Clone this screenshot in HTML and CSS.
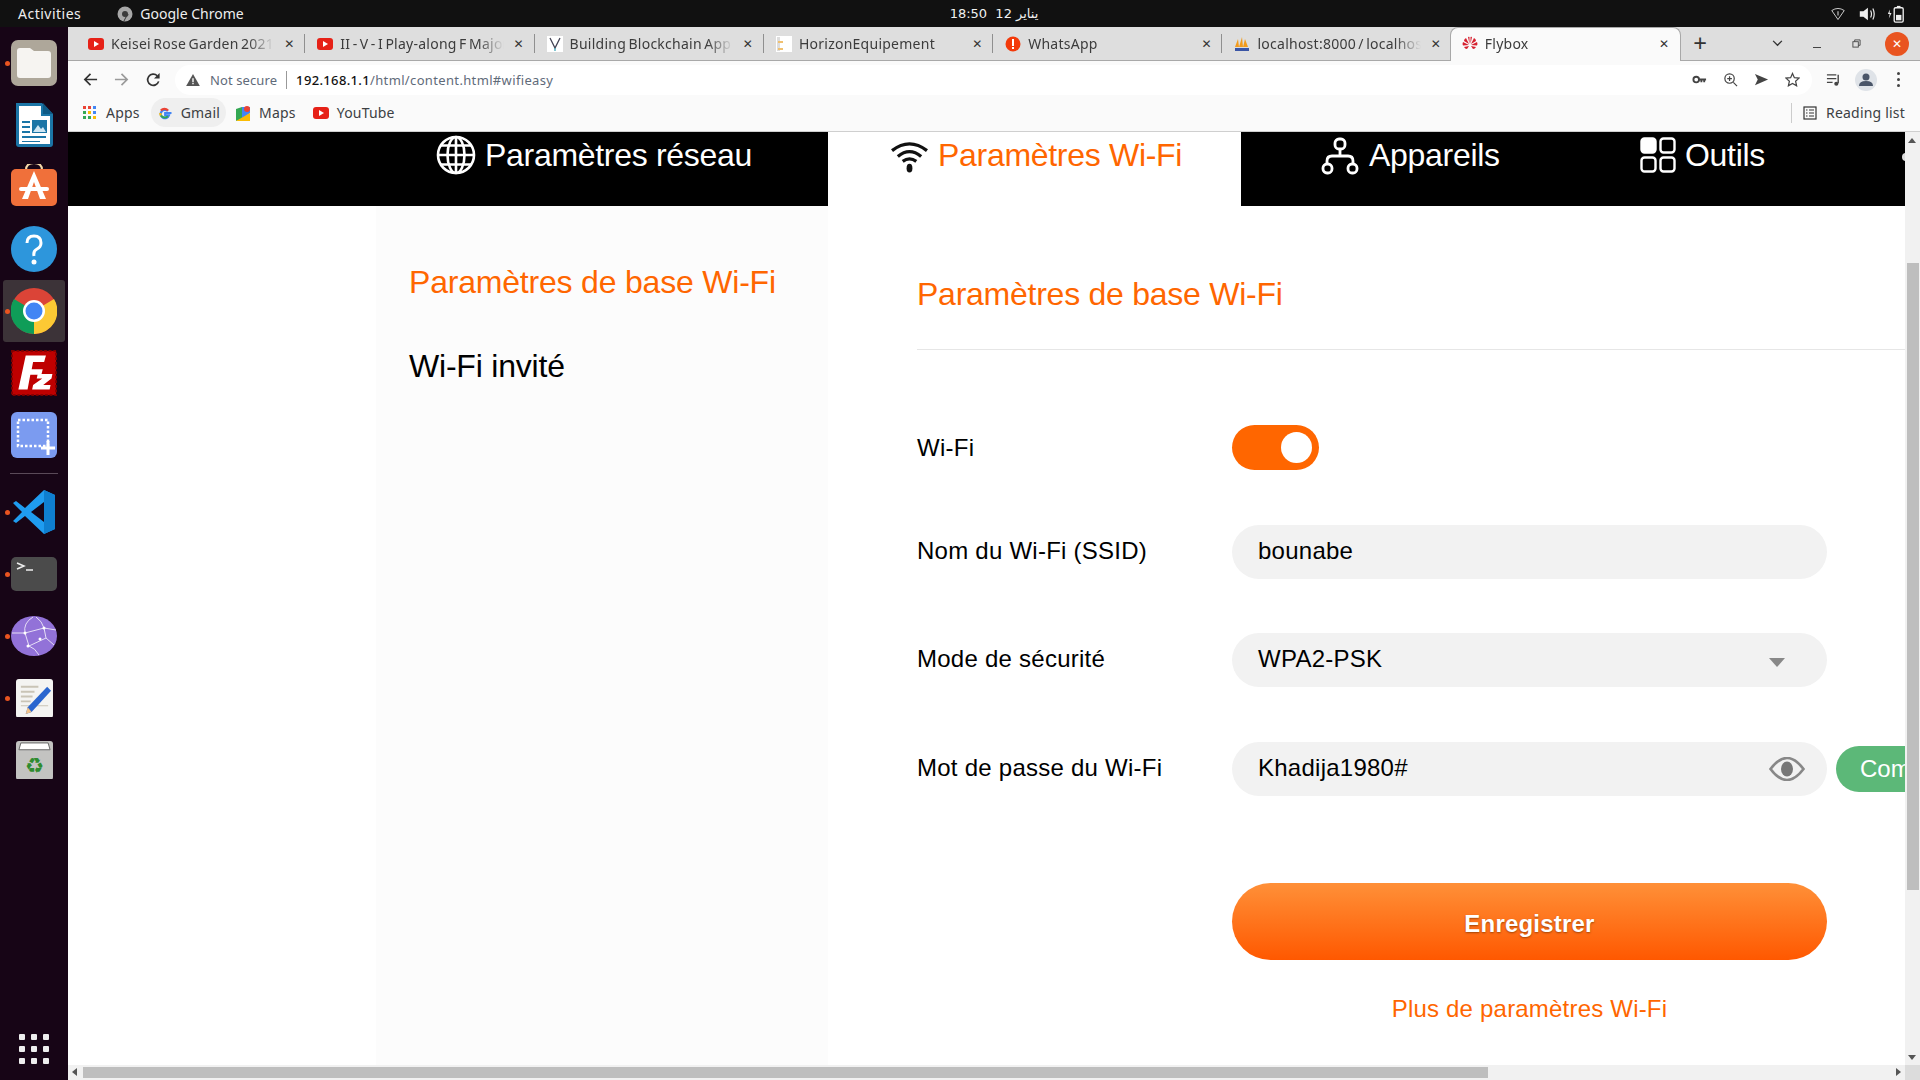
FILE: index.html
```html
<!DOCTYPE html>
<html lang="en">
<head>
    <meta charset="UTF-8">
    <title>Flybox</title>
    <link rel="stylesheet" href="styles.css">
</head>
<body>
    <div class="topbar">
        <div class="topbar-left">
            <span class="activities">Activities</span>
            <svg class="top-chrome-icon" viewBox="0 0 16 16"><circle cx="8" cy="8" r="7.5" fill="#a8a8a8"/><circle cx="8" cy="8" r="3" fill="#3a3a3a"/><path d="M11 8a3 3 0 0 1-2 3l-2 4" fill="none" stroke="#3a3a3a" stroke-width="1"/></svg>
            <span>Google Chrome</span>
        </div>
        <div class="clock">18:50&nbsp;&nbsp;12 يناير</div>
        <div class="topbar-right">
            <svg class="tray-icon" viewBox="-3 -2 26 22"><path d="M1 4q9-6 18 0l-9 13z" fill="none" stroke="#ddd" stroke-width="1.3"/><path d="M10 5v6" stroke="#ddd" stroke-width="1.5"/></svg>
            <svg class="tray-icon" viewBox="0 0 20 18"><path d="M2 6h4l5-4v14l-5-4H2z" fill="#eee"/><path d="M14 5q2 4 0 8M16.500 3q3 6 0 12" fill="none" stroke="#eee" stroke-width="1.300"/></svg>
            <svg class="tray-icon" viewBox="0 0 20 20"><path d="M3 5l-2 5h2l-1 5 3-6H3z" fill="#eee"/><rect x="8" y="3" width="10" height="16" rx="1.500" fill="none" stroke="#eee" stroke-width="1.500"/><rect x="11" y="1" width="4" height="2" fill="#eee"/><rect x="10" y="11" width="6" height="6" fill="#eee"/></svg>
        </div>
    </div>

    <div class="desktop">
        <div class="dock">
            <div class="dock-item">
                <span class="dock-dot"></span>
                <svg viewBox="0 0 46 46"><rect width="46" height="46" rx="7" fill="#aea79a"/><path d="M6 11q0-3 3-3h10l4 3h14q3 0 3 3v21q0 3-3 3H9q-3 0-3-3z" fill="#f6f4f1"/></svg>
            </div>
            <div class="dock-item">
                <svg viewBox="0 0 46 46"><path d="M5 1h26l11 11v30q0 3-3 3H8q-3 0-3-3z" fill="#1b75a6"/><path d="M8 4h22v10h9v28H8z" fill="#fff"/><path d="M32 1l10 11H32z" fill="#0f5a85"/><path d="M11 19h8v2h-8zM11 24h8v2h-8zM11 29h8v2h-8zM11 34h24v2H11zM11 39h18v1h-18z" fill="#1b75a6"/><rect x="21" y="18" width="15" height="13" fill="#1b75a6"/><path d="M22 30l5-7 3 4 2-2 3 5z" fill="#cfe6f3"/></svg>
            </div>
            <div class="dock-item">
                <svg viewBox="0 3 46 46"><path d="M15 9q0-7 8-7t8 7" fill="none" stroke="#f3d8a8" stroke-width="2"/><rect y="8" width="46" height="37" rx="5" fill="#f0703a"/><path d="M23 10L11 38h6l6-17 6 17h6z" fill="#fff"/><rect x="8" y="26" width="30" height="4" rx="2" fill="#fff"/></svg>
            </div>
            <div class="dock-item">
                <svg viewBox="0 0 46 46"><circle cx="23" cy="23" r="23" fill="#2d96dc"/><path d="M16 17q0-7 7-7t7 7q0 4-4 6t-3 7" fill="none" stroke="#fff" stroke-width="3"/><circle cx="23" cy="36" r="2.500" fill="#fff"/></svg>
            </div>
            <div class="dock-item dock-active">
                <span class="dock-dot"></span>
                <svg viewBox="0 0 46 46"><circle cx="23" cy="23" r="23" fill="#db4437"/><path d="M23 23L3 11a23 23 0 0 0 20 35z" fill="#0f9d58"/><path d="M23 23l20-12A23 23 0 0 1 23 46z" fill="#fcc934"/><circle cx="23" cy="23" r="11" fill="#fff"/><circle cx="23" cy="23" r="8.500" fill="#4285f4"/></svg>
            </div>
            <div class="dock-item">
                <svg viewBox="0 0 50 50"><rect x="1" y="1" width="48" height="48" fill="#bf0000" stroke="#7c0000" stroke-width="2" stroke-dasharray="3 2"/><path d="M16 6h22l-2 7H24l-1.500 8h12L33 27H21l-3 16H8z" fill="#fff"/><path d="M29 26h16l-1 5-9 7h8l-1 5H23l1-5 10-7h-6z" fill="#fff"/></svg>
            </div>
            <div class="dock-item">
                <svg viewBox="0 0 46 46"><rect width="46" height="46" rx="6" fill="#7b9bf0"/><rect x="7" y="8" width="30" height="26" fill="none" stroke="#fff" stroke-width="2.500" stroke-dasharray="2.500 2"/><path d="M37 29v14M30 36h14" stroke="#fff" stroke-width="3"/></svg>
            </div>
            <div class="dock-separator"></div>
            <div class="dock-item">
                <span class="dock-dot"></span>
                <svg viewBox="0 0 46 46"><path d="M33 1l11 5v34l-11 5L14 27 5 34l-3-2 9-9-9-9 3-2 9 7z" fill="#1f9cf0"/><path d="M33 13v20l-13-10z" fill="#170516"/><path d="M33 1l11 5v34l-11 5z" fill="#0f7fd0"/></svg>
            </div>
            <div class="dock-item">
                <span class="dock-dot"></span>
                <svg viewBox="0 0 46 34"><rect width="46" height="34" rx="5" fill="#4b4b4b"/><path d="M6 6l7 3-7 3" fill="none" stroke="#eee" stroke-width="1.500"/><path d="M15 13h7" stroke="#eee" stroke-width="1.500"/></svg>
            </div>
            <div class="dock-item">
                <span class="dock-dot"></span>
                <svg viewBox="0 0 46 40"><ellipse cx="23" cy="20" rx="23" ry="20" fill="#9272d8"/><path d="M1 17l13 0 19-5 12 2M14 17l4 13 17-8 -2-10M18 30q6 2 10 9M35 22l8 7M14 17q-2-10 8-16M33 12q-2-7-8-11" fill="none" stroke="#e6def6" stroke-width="1"/><circle cx="14" cy="17" r="1.500" fill="#fff"/><circle cx="33" cy="12" r="1.500" fill="#fff"/><circle cx="29" cy="23" r="1.500" fill="#fff"/><circle cx="17" cy="30" r="1.500" fill="#fff"/></svg>
            </div>
            <div class="dock-item">
                <span class="dock-dot"></span>
                <svg class="dock-narrow" viewBox="0 0 38 40"><rect width="38" height="40" rx="3" fill="#f4f4f2"/><path d="M5 7h18v2H5zM5 12h14v2H5zM5 17h12v2H5zM5 22h10v2H5zM5 27h28v1H5z" fill="#c9c4b6"/><path d="M32 8l4 4-20 22-6 2 2-7z" fill="#2a66cf"/><path d="M12 29l4 5-6 2z" fill="#f2c38a"/></svg>
            </div>
            <div class="dock-item">
                <svg class="dock-narrow" viewBox="0 0 38 40"><rect width="38" height="40" rx="3" fill="#c3c3c1"/><path d="M5 2h28l2 7H3z" fill="#fff" stroke="#666" stroke-width="1"/><text class="recycle-glyph" x="19" y="33" text-anchor="middle">♻</text></svg>
            </div>
            <div class="dock-grid">
                <span></span><span></span><span></span>
                <span></span><span></span><span></span>
                <span></span><span></span><span></span>
            </div>
        </div>

        <div class="browser">
            <div class="tabstrip">
                <div class="tab">
                    <svg class="favicon" viewBox="0 0 16 16"><rect y="2" width="16" height="12" rx="3" fill="#e62117"/><path d="M6 5l5 3-5 3z" fill="#fff"/></svg>
                    <span class="tab-title">Keisei Rose Garden 2021</span>
                    <span class="tab-close">✕</span>
                </div>
                <div class="tab">
                    <svg class="favicon" viewBox="0 0 16 16"><rect y="2" width="16" height="12" rx="3" fill="#e62117"/><path d="M6 5l5 3-5 3z" fill="#fff"/></svg>
                    <span class="tab-title">II - V - I Play-along F Major</span>
                    <span class="tab-close">✕</span>
                </div>
                <div class="tab">
                    <svg class="favicon" viewBox="0 0 16 16"><rect width="16" height="16" fill="#fff"/><path d="M3 2l5 10 5-10" fill="none" stroke="#445" stroke-width="1.300"/><path d="M8 12v3" stroke="#4ab" stroke-width="1.300"/></svg>
                    <span class="tab-title">Building Blockchain App</span>
                    <span class="tab-close">✕</span>
                </div>
                <div class="tab">
                    <svg class="favicon" viewBox="0 0 16 16"><rect width="16" height="16" fill="#fff"/><path d="M1 1h3v14H1z" fill="#ddd"/><path d="M2 5h5v2H2zM2 12h5v2H2z" fill="#f0c070"/></svg>
                    <span class="tab-title">HorizonEquipement</span>
                    <span class="tab-close">✕</span>
                </div>
                <div class="tab">
                    <svg class="favicon" viewBox="0 0 16 16"><circle cx="8" cy="8" r="7.500" fill="#f33a0a"/><path d="M7 3h2v7H7zM7 11h2v2H7z" fill="#fff"/></svg>
                    <span class="tab-title">WhatsApp</span>
                    <span class="tab-close">✕</span>
                </div>
                <div class="tab tab-before-active">
                    <svg class="favicon" viewBox="0 0 16 16"><path d="M1 11l3-8 1 8zM5 11l3-10 1 10zM9 11l2-8 3 8z" fill="#f29b1d"/><path d="M1 12h14v3H1z" fill="#3a55a5"/></svg>
                    <span class="tab-title">localhost:8000 / localhost</span>
                    <span class="tab-close">✕</span>
                </div>
                <div class="tab tab-active">
                    <svg class="favicon" viewBox="0 0 16 16"><path d="M7 8L4 2q-2 1-2 3zM9 8l3-6q2 1 2 3zM7.500 8L6 1q1-.5 1.500 0zM8.500 8L10 1q-1-.5-1.500 0zM7 9L1 6q-1 2 0 3.500zM9 9l6-3q1 2 0 3.500zM7 10l-5 1q1 2 3 2zM9 10l5 1q-1 2-3 2z" fill="#d6202f"/></svg>
                    <span class="tab-title">Flybox</span>
                    <span class="tab-close">✕</span>
                </div>
                <span class="new-tab">+</span>
                <div class="window-controls">
                    <svg class="win-chevron" viewBox="0 0 12 8"><path d="M1 1l5 5 5-5" fill="none" stroke="#333" stroke-width="1.500"/></svg>
                    <span class="win-min"></span>
                    <svg class="win-restore" viewBox="0 0 10 10"><rect x="1" y="3" width="6" height="6" fill="none" stroke="#444"/><path d="M3 3V1h6v6H7" fill="none" stroke="#444"/></svg>
                    <span class="win-close">✕</span>
                </div>
            </div>

            <div class="toolbar">
                <svg class="tool-icon" viewBox="0 0 16 16"><path d="M15 8H2M8 2L2 8l6 6" fill="none" stroke="#333" stroke-width="1.800"/></svg>
                <svg class="tool-icon tool-forward" viewBox="0 0 16 16"><path d="M1 8h13M8 2l6 6-6 6" fill="none" stroke="#9a9a9a" stroke-width="1.800"/></svg>
                <svg class="tool-icon tool-reload" viewBox="0 0 16 16"><path d="M13.500 10A6 6 0 1 1 12 4" fill="none" stroke="#333" stroke-width="1.800"/><path d="M14.500 1v6h-6z" fill="#333"/></svg>
                <div class="omnibox">
                    <svg class="warn-icon" viewBox="0 0 16 14"><path d="M8 0l8 14H0z" fill="#555"/><path d="M7.200 5h1.600v4.500H7.200zM7.200 10.500h1.600V12H7.200z" fill="#fff"/></svg>
                    <span class="not-secure">Not secure</span>
                    <span class="omni-url"><b>192.168.1.1</b>/html/content.html#wifieasy</span>
                    <span class="omni-right">
                        <svg class="omni-icon" viewBox="0 0 16 16"><circle cx="4.500" cy="8" r="3" fill="none" stroke="#444" stroke-width="2"/><path d="M7 7h8v2h-1v2h-2V9h-1v2H9V9H7z" fill="#444"/></svg>
                        <svg class="omni-icon" viewBox="0 0 16 16"><circle cx="7" cy="7" r="5" fill="none" stroke="#444" stroke-width="1.300"/><path d="M11 11l4 4M7 4.500v5M4.500 7h5" stroke="#444" stroke-width="1.300"/></svg>
                        <svg class="omni-icon" viewBox="0 0 16 16"><path d="M1 2l14 6-14 6 3-6z" fill="#444"/></svg>
                        <svg class="omni-icon" viewBox="0 0 16 16"><path d="M8 1.500l2 4.500 5 .5-3.700 3.300 1.100 4.900L8 12.300l-4.400 2.400 1.100-4.900L1 6.500 6 6z" fill="none" stroke="#444" stroke-width="1.300"/></svg>
                    </span>
                </div>
                <svg class="tool-icon tool-media" viewBox="0 0 16 16"><path d="M1 3h10M1 7h10M1 11h6" stroke="#444" stroke-width="1.300"/><path d="M13 3v9" stroke="#444" stroke-width="1.500"/><circle cx="11" cy="12.500" r="2.200" fill="#444"/></svg>
                <span class="avatar"><svg viewBox="0 0 22 22"><circle cx="11" cy="8" r="3.500" fill="#4a5568"/><path d="M4 17q0-5 7-5t7 5z" fill="#4a5568"/></svg></span>
                <span class="menu-dots"><i></i><i></i><i></i></span>
            </div>

            <div class="bookmarks">
                <svg class="apps-icon" viewBox="0 0 14 14"><rect width="3" height="3" fill="#ea4335"/><rect x="5" width="3" height="3" fill="#ea4335"/><rect x="10" width="3" height="3" fill="#4285f4"/><rect y="5" width="3" height="3" fill="#34a853"/><rect x="5" y="5" width="3" height="3" fill="#fbbc04"/><rect x="10" y="5" width="3" height="3" fill="#4285f4"/><rect y="10" width="3" height="3" fill="#34a853"/><rect x="5" y="10" width="3" height="3" fill="#34a853"/><rect x="10" y="10" width="3" height="3" fill="#fbbc04"/></svg>
                <span class="bm-apps">Apps</span>
                <span class="bm-gmail">
                    <svg class="favicon" viewBox="0 0 16 16"><path d="M14.500 8H8.200v2.400h3.700a4.200 4.200 0 1 1-1-4.400" fill="none" stroke="#4285f4" stroke-width="2.200"/><path d="M3.900 5.500A4.800 4.800 0 0 1 11 5.500" fill="none" stroke="#ea4335" stroke-width="2.200"/><path d="M3.300 8a5 5 0 0 0 .6 2.500" fill="none" stroke="#fbbc04" stroke-width="2.200"/><path d="M4 10.600A4.800 4.800 0 0 0 11 11.300" fill="none" stroke="#34a853" stroke-width="2.200"/></svg>
                    Gmail
                </span>
                <svg class="favicon bm-maps-icon" viewBox="0 0 16 16"><path d="M1 4l6-2v12l-6 2z" fill="#34a853"/><path d="M7 2l8 0v6L7 14z" fill="#4285f4"/><path d="M1 16l14-8v8z" fill="#fbbc04"/><circle cx="12" cy="4" r="3" fill="#ea4335"/></svg>
                <span class="bm-maps">Maps</span>
                <svg class="favicon bm-yt-icon" viewBox="0 0 16 16"><rect y="2" width="16" height="12" rx="3" fill="#e62117"/><path d="M6 5l5 3-5 3z" fill="#fff"/></svg>
                <span class="bm-yt">YouTube</span>
                <span class="bm-reading">
                    <svg class="favicon" viewBox="0 0 16 16"><rect x="2" y="2" width="12" height="12" fill="none" stroke="#333" stroke-width="1.200"/><path d="M4 5h1.500M7 5h5M4 8h1.500M7 8h5M4 11h1.500M7 11h5" stroke="#333" stroke-width="1.200"/></svg>
                    Reading list
                </span>
            </div>

            <div class="viewport">
                <div class="page">
                    <div class="nav">
                        <div class="nav-item nav-network">
                            <svg class="nav-icon" viewBox="0 0 40 40"><g fill="none" stroke="#fff" stroke-width="2.600"><circle cx="20" cy="20" r="18"/><ellipse cx="20" cy="20" rx="8.500" ry="18"/><path d="M20 2v36M2 20h36M5 10.500h30M5 29.500h30"/></g></svg>
                            <span>Paramètres réseau</span>
                        </div>
                        <div class="nav-item nav-wifi active">
                            <svg class="nav-icon" viewBox="0 0 40 34"><g fill="none" stroke="#111" stroke-width="3.400"><path d="M2 11q18-14 36 0"/><path d="M8 17q12-10 24 0"/><path d="M13 22q7-5 14 0"/></g><ellipse cx="20" cy="29" rx="3" ry="4.500" fill="#111"/></svg>
                            <span>Paramètres Wi-Fi</span>
                        </div>
                        <div class="nav-item nav-devices">
                            <svg class="nav-icon" viewBox="0 0 38 38"><g fill="none" stroke="#fff" stroke-width="2.800" stroke-linejoin="round"><rect x="14" y="2" width="10" height="10" rx="4"/><path d="M19 12v7M6 28v-4q0-5 5-5h16q5 0 5 5v4"/><rect x="2" y="27" width="9" height="9" rx="4"/><rect x="27" y="27" width="9" height="9" rx="4"/></g></svg>
                            <span>Appareils</span>
                        </div>
                        <div class="nav-item nav-tools">
                            <svg class="nav-icon" viewBox="0 0 36 36"><g stroke="#fff" stroke-width="2.400"><rect x="1.500" y="1.500" width="14" height="14" rx="3" fill="#fff"/><g fill="none"><rect x="20.500" y="1.500" width="14" height="14" rx="3"/><rect x="1.500" y="20.500" width="14" height="14" rx="3"/><rect x="20.500" y="20.500" width="14" height="14" rx="3"/></g></g></svg>
                            <span>Outils</span>
                        </div>
                        <span class="nav-more"></span>
                    </div>
                    <div class="body-row">
                        <div class="sidebar">
                            <div class="side-item active">Paramètres de base Wi-Fi</div>
                            <div class="side-item">Wi-Fi invité</div>
                        </div>
                        <div class="main">
                            <div class="main-title">Paramètres de base Wi-Fi</div>
                            <div class="form">
                                <div class="form-row row-toggle">
                                    <label class="form-label">Wi-Fi</label>
                                    <span class="toggle"><span class="toggle-knob"></span></span>
                                </div>
                                <div class="form-row">
                                    <label class="form-label">Nom du Wi-Fi (SSID)</label>
                                    <div class="field">bounabe</div>
                                </div>
                                <div class="form-row">
                                    <label class="form-label">Mode de sécurité</label>
                                    <div class="field">WPA2-PSK<span class="select-arrow"></span></div>
                                </div>
                                <div class="form-row row-password">
                                    <label class="form-label">Mot de passe du Wi-Fi</label>
                                    <div class="field">Khadija1980#
                                        <svg class="eye-icon" viewBox="0 0 36 24"><path d="M1.500 12Q18-10 34.500 12 18 34 1.500 12z" fill="none" stroke="#888" stroke-width="2.600"/><ellipse cx="18" cy="12" rx="6" ry="7.500" fill="#777"/></svg>
                                    </div>
                                    <button class="btn-compare">Com</button>
                                </div>
                            </div>
                            <div class="actions">
                                <button class="btn-save">Enregistrer</button>
                                <a class="more-link">Plus de paramètres Wi-Fi</a>
                            </div>
                        </div>
                    </div>
                </div>
                <div class="vscroll">
                    <span class="arrow-up"></span>
                    <span class="vthumb"></span>
                    <span class="arrow-down"></span>
                </div>
                <div class="hscroll">
                    <span class="arrow-left"></span>
                    <span class="hthumb"></span>
                    <span class="arrow-right"></span>
                </div>
                <div class="scroll-corner"></div>
            </div>
        </div>
    </div>
</body>
</html>
```

FILE: styles.css
```css
:root {
    --orange: #ff6600;
    --ui-font: 'Noto Sans', 'DejaVu Sans', sans-serif;
    --page-font: 'Liberation Sans', Arial, sans-serif;
}
html, body {
    margin: 0;
    padding: 0;
    width: 1920px;
    height: 1080px;
    overflow: hidden;
}
body {
    display: flex;
    flex-direction: column;
    font-family: var(--ui-font);
    background: #170516;
}

/* ubuntu top bar */
.topbar {
    height: 27px;
    flex: none;
    background: #111;
    color: #eee;
    font-size: 14px;
    display: grid;
    grid-template-columns: 1fr auto 1fr;
    align-items: center;
}
.topbar-left {
    display: flex;
    align-items: center;
}
.activities {
    margin-left: 18px;
    margin-right: 36px;
    letter-spacing: 0.5px;
}
.top-chrome-icon {
    width: 16px;
    height: 16px;
    margin-right: 7px;
}
.clock {
    font-family: 'DejaVu Sans', sans-serif;
    font-size: 13px;
    color: #f0f0f0;
    margin-left: 68px;
}
.topbar-right {
    display: flex;
    justify-content: flex-end;
    gap: 11px;
    padding-right: 15px;
}
.tray-icon {
    width: 18px;
    height: 18px;
}

.desktop {
    flex: 1;
    display: flex;
    min-height: 0;
}

/* dock */
.dock {
    width: 68px;
    flex: none;
    background: #170516;
    display: flex;
    flex-direction: column;
    align-items: center;
    padding-top: 5px;
    box-sizing: border-box;
}
.dock-item {
    width: 62px;
    height: 62px;
    flex: none;
    position: relative;
    display: flex;
    align-items: center;
    justify-content: center;
    border-radius: 3px;
}
.dock-item svg {
    width: 46px;
    max-height: 46px;
}
.dock-item .dock-narrow {
    width: 37px;
}
.recycle-glyph {
    font-family: 'DejaVu Sans', sans-serif;
    font-size: 22px;
    fill: #2e8b2e;
}
.dock-active {
    background: #3c3338;
}
.dock-dot {
    position: absolute;
    left: 2px;
    top: 29px;
    width: 5px;
    height: 5px;
    border-radius: 50%;
    background: #e95420;
}
.dock-separator {
    width: 48px;
    height: 1px;
    background: #5a4a58;
    margin: 7px 0 7px;
    flex: none;
}
.dock-grid {
    margin-top: auto;
    margin-bottom: 16px;
    display: grid;
    grid-template-columns: repeat(3, 6px);
    gap: 6px;
}
.dock-grid span {
    width: 6px;
    height: 6px;
    border-radius: 1px;
    background: #eee;
}

/* browser frame */
.browser {
    flex: 1;
    min-width: 0;
    display: flex;
    flex-direction: column;
    background: #fafafa;
}
.tabstrip {
    height: 34px;
    flex: none;
    background: #dedede;
    border-bottom: 1px solid #a8a8a8;
    box-sizing: border-box;
    display: flex;
    align-items: stretch;
    padding-left: 8px;
    font-size: 14px;
    color: #3c3c3c;
}
.tab {
    width: 229.3px;
    flex: none;
    box-sizing: border-box;
    padding: 0 4px 0 12px;
    display: flex;
    align-items: center;
    position: relative;
}
.tab::after {
    content: "";
    position: absolute;
    right: 0;
    top: 7px;
    bottom: 7px;
    width: 1px;
    background: #8f8f8f;
}
.tab-before-active::after,
.tab-active::after {
    display: none;
}
.tab-active {
    background: #fafafa;
    border: 1px solid #a8a8a8;
    border-bottom: none;
    border-radius: 8px 8px 0 0;
    height: 34px;
    width: 231.3px;
    margin-left: -2px;
    padding: 0 4px 2px 11px;
}
.favicon {
    width: 16px;
    height: 16px;
    flex: none;
}
.tab-title {
    margin-left: 7px;
    flex: 1;
    min-width: 0;
    white-space: nowrap;
    overflow: hidden;
    letter-spacing: 0.25px;
    word-spacing: -1.5px;
    -webkit-mask-image: linear-gradient(to right, #000 84%, transparent 100%);
    mask-image: linear-gradient(to right, #000 84%, transparent 100%);
}
.tab-close {
    width: 24px;
    flex: none;
    text-align: center;
    font-size: 12px;
    color: #333;
    margin-left: 3px;
}
.new-tab {
    width: 38px;
    flex: none;
    text-align: center;
    font-size: 24px;
    line-height: 32px;
    color: #333;
}
.window-controls {
    flex: 1;
    display: flex;
    align-items: center;
    padding-left: 53px;
}
.win-chevron {
    width: 11px;
    height: 7px;
}
.win-min {
    width: 8px;
    height: 1px;
    background: #444;
    margin: 7px 0 0 30px;
}
.win-restore {
    width: 9px;
    height: 9px;
    margin-left: 31px;
}
.win-close {
    width: 24px;
    height: 24px;
    border-radius: 50%;
    background: #e95420;
    color: #fff;
    font-size: 12px;
    line-height: 24px;
    text-align: center;
    margin-left: 24px;
}

/* toolbar and omnibox */
.toolbar {
    height: 35px;
    flex: none;
    box-sizing: border-box;
    display: flex;
    align-items: center;
    padding: 2px 0 0 15px;
}
.tool-icon {
    width: 15px;
    height: 15px;
    flex: none;
}
.tool-forward {
    margin-left: 16px;
}
.tool-reload {
    margin-left: 17px;
}
.omnibox {
    margin-left: 14px;
    width: 1637px;
    height: 30px;
    background: #fff;
    border-radius: 15px;
    flex: none;
    box-sizing: border-box;
    display: flex;
    align-items: center;
    padding-left: 11px;
    font-size: 13px;
    color: #5f6b7a;
}
.warn-icon {
    width: 14px;
    height: 12px;
    flex: none;
}
.not-secure {
    margin-left: 10px;
    padding-right: 9px;
    border-right: 1px solid #999;
    line-height: 18px;
    letter-spacing: 0.1px;
}
.omni-url {
    margin-left: 9px;
    letter-spacing: 0.35px;
}
.omni-url b {
    color: #111;
    font-weight: 500;
}
.omni-right {
    margin-left: auto;
    display: flex;
    gap: 16px;
    padding-right: 12px;
}
.omni-icon {
    width: 15px;
    height: 15px;
}
.tool-media {
    margin-left: 14px;
}
.avatar {
    width: 22px;
    height: 22px;
    border-radius: 50%;
    background: #dfe3e8;
    margin-left: 14px;
    flex: none;
}
.avatar svg {
    display: block;
}
.menu-dots {
    display: flex;
    flex-direction: column;
    gap: 3px;
    margin-left: 20px;
}
.menu-dots i {
    width: 3px;
    height: 3px;
    border-radius: 50%;
    background: #444;
}

/* bookmarks */
.bookmarks {
    height: 33px;
    flex: none;
    display: flex;
    align-items: center;
    padding: 0 0 2px 15px;
    font-size: 14px;
    letter-spacing: 0.2px;
    color: #3c4043;
    border-bottom: 1px solid #cfcfcf;
}
.apps-icon {
    width: 14px;
    height: 14px;
    flex: none;
}
.bm-apps {
    margin-left: 9px;
}
.bm-gmail {
    margin-left: 11px;
    height: 29px;
    padding: 0 6px 0 6px;
    border-radius: 15px;
    background: #efefef;
    display: flex;
    align-items: center;
    gap: 8px;
}
.bm-maps-icon {
    margin-left: 9px;
}
.bm-maps {
    margin-left: 8px;
}
.bm-yt-icon {
    margin-left: 17px;
}
.bm-yt {
    margin-left: 8px;
}
.bm-reading {
    margin-left: auto;
    display: flex;
    align-items: center;
    gap: 8px;
    border-left: 1px solid #ccc;
    padding-left: 10px;
    padding-right: 15px;
    height: 20px;
}

/* router page */
.viewport {
    flex: 1;
    min-height: 0;
    display: grid;
    grid-template-columns: 1fr 15px;
    grid-template-rows: 1fr 15px;
    background: #fff;
}
.page {
    overflow: hidden;
    font-family: var(--page-font);
    color: #000;
    min-width: 0;
    min-height: 0;
    display: flex;
    flex-direction: column;
}
.nav {
    height: 74px;
    flex: none;
    background: #000;
    color: #fff;
    font-size: 32px;
    letter-spacing: -0.3px;
    display: flex;
    align-items: flex-start;
    overflow: hidden;
}
.nav-item {
    height: 74px;
    flex: none;
    box-sizing: border-box;
    display: flex;
    align-items: flex-start;
    line-height: 46px;
    white-space: nowrap;
}
.nav-icon {
    flex: none;
    margin-right: 9px;
}
.nav-network {
    width: 760px;
    padding-left: 368px;
}
.nav-network .nav-icon {
    width: 40px;
    height: 40px;
    margin-top: 3px;
}
.nav-wifi {
    width: 413px;
    padding-left: 62px;
}
.nav-wifi .nav-icon {
    width: 39px;
    height: 33px;
    margin-top: 8px;
}
.nav-item.active {
    background: #fff;
    color: var(--orange);
}
.nav-devices {
    width: 339px;
    padding-left: 80px;
}
.nav-devices .nav-icon {
    width: 38px;
    height: 38px;
    margin-top: 5px;
    margin-right: 10px;
}
.nav-tools {
    width: 246px;
    padding-left: 60px;
}
.nav-tools .nav-icon {
    width: 36px;
    height: 36px;
    margin-top: 5px;
}
.nav-more {
    margin: 21px 0 0 76px;
    width: 8px;
    height: 8px;
    border-radius: 50%;
    background: #ddd;
    flex: none;
}
.body-row {
    flex: 1;
    min-height: 0;
    display: flex;
}
.sidebar {
    width: 452px;
    margin-left: 308px;
    padding: 34px 0 0 33px;
    box-sizing: border-box;
    background: #fcfcfc;
    flex: none;
}
.side-item {
    font-size: 32px;
    line-height: 84px;
    white-space: nowrap;
    letter-spacing: -0.2px;
}
.side-item.active {
    color: var(--orange);
}
.main {
    flex: 1;
    min-width: 0;
    padding-left: 89px;
}
.main-title {
    margin-top: 68px;
    font-size: 32px;
    line-height: 40px;
    letter-spacing: -0.25px;
    padding-bottom: 35px;
    border-bottom: 1px solid #e6e6e6;
    color: var(--orange);
}
.form {
    margin-top: 75px;
    display: flex;
    flex-direction: column;
    gap: 54px;
}
.form-row {
    display: flex;
    align-items: center;
    height: 54px;
    font-size: 24px;
    letter-spacing: 0.25px;
}
.row-toggle {
    height: 46px;
}
.row-password {
    margin-top: 1px;
}
.form-label {
    width: 315px;
    flex: none;
    padding-bottom: 2px;
}
.row-toggle .form-label {
    padding-bottom: 0;
}
.toggle {
    width: 87px;
    height: 45px;
    border-radius: 23px;
    background: var(--orange);
    position: relative;
    flex: none;
    align-self: flex-start;
}
.toggle-knob {
    position: absolute;
    left: 49px;
    top: 7px;
    width: 31px;
    height: 31px;
    border-radius: 50%;
    background: #fff;
}
.field {
    width: 595px;
    height: 54px;
    flex: none;
    box-sizing: border-box;
    border-radius: 27px;
    background: #f2f2f2;
    padding-left: 26px;
    line-height: 52px;
    position: relative;
}
.select-arrow {
    position: absolute;
    left: 537px;
    top: 25px;
    border-left: 8px solid transparent;
    border-right: 8px solid transparent;
    border-top: 9px solid #888;
}
.eye-icon {
    position: absolute;
    left: 537px;
    top: 15px;
    width: 36px;
    height: 24px;
}
.btn-compare {
    margin-left: 9px;
    width: 100px;
    height: 46px;
    flex: none;
    border: none;
    border-radius: 23px 0 0 23px;
    background: #5cb878;
    color: #fff;
    font-family: inherit;
    font-size: 24px;
    padding: 0 0 0 24px;
    text-align: left;
}
.actions {
    width: 595px;
    margin-left: 315px;
    margin-top: 87px;
    display: flex;
    flex-direction: column;
    align-items: center;
}
.btn-save {
    width: 100%;
    height: 77px;
    border: none;
    border-radius: 39px;
    padding: 5px 0 0;
    background: linear-gradient(to bottom, #ff9038, #ff5800);
    color: #fff;
    font-family: inherit;
    font-size: 24px;
    font-weight: 700;
    letter-spacing: 0.2px;
    text-shadow: 0 1px 2px rgba(120, 50, 0, 0.7);
}
.more-link {
    margin-top: 35px;
    line-height: 28px;
    font-size: 24px;
    letter-spacing: 0.2px;
    color: var(--orange);
}

/* scrollbars */
.vscroll {
    background: #f1f1f1;
    position: relative;
}
.vthumb {
    position: absolute;
    left: 2px;
    right: 1px;
    top: 131px;
    height: 627px;
    background: #bebebe;
}
.arrow-up,
.arrow-down {
    position: absolute;
    left: 3px;
    border-left: 4px solid transparent;
    border-right: 4px solid transparent;
}
.arrow-up {
    top: 6px;
    border-bottom: 5px solid #555;
}
.arrow-down {
    bottom: 5px;
    border-top: 5px solid #555;
}
.hscroll {
    background: #f1f1f1;
    position: relative;
}
.hthumb {
    position: absolute;
    left: 15px;
    top: 2px;
    height: 11px;
    width: 1405px;
    background: #bebebe;
}
.arrow-left,
.arrow-right {
    position: absolute;
    top: 3px;
    border-top: 4px solid transparent;
    border-bottom: 4px solid transparent;
}
.arrow-left {
    left: 4px;
    border-right: 5px solid #555;
}
.arrow-right {
    right: 4px;
    border-left: 5px solid #555;
}
.scroll-corner {
    background: #dcdcdc;
}
```
